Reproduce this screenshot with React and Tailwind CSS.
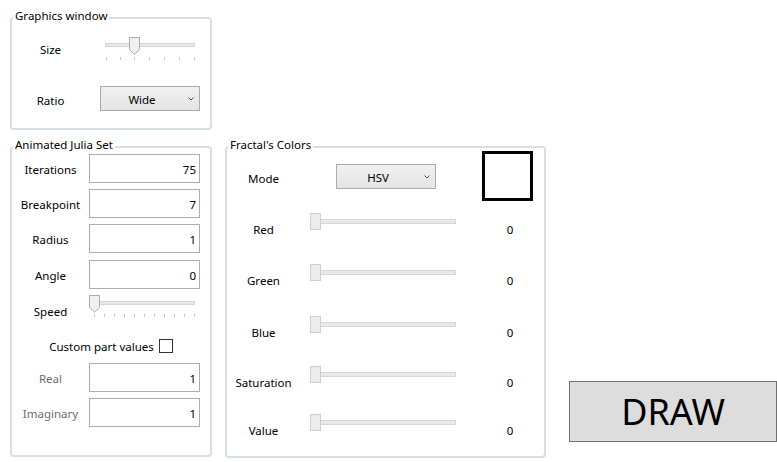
import React from "react";

function Group({ label, className, children }) {
  return (
    <div className={`relative border-2 border-[#d5dfe5] rounded-[4px] ${className}`}>
      <span className="absolute -top-[11px] left-[1px] bg-white px-[2px] leading-[16px] text-black whitespace-nowrap">
        {label}
      </span>
      {children}
    </div>
  );
}

function Chevron() {
  return (
    <svg width="6" height="4" viewBox="0 0 6 4" className="ml-[5px] shrink-0">
      <path d="M0.5 0.5 L3 3 L5.5 0.5" fill="none" stroke="#555" strokeWidth="1" />
    </svg>
  );
}

function Combo({ value }) {
  return (
    <div className="w-[100px] h-[25px] border border-[#acacac] bg-linear-to-b from-[#f0f0f0] to-[#e5e5e5] flex items-center shrink-0">
      <span className="w-[82px] text-center leading-[16px] translate-y-[1px]">{value}</span>
      <Chevron />
    </div>
  );
}

function TextBox({ value }) {
  return (
    <div className="w-[111px] h-[29px] border border-[#abadb3] bg-white flex items-center justify-end pr-[3px] leading-[16px] shrink-0">
      <span className="translate-y-[1px]">{value}</span>
    </div>
  );
}

function PointerThumb({ className }) {
  return (
    <svg width="11" height="18" viewBox="0 0 11 18" className={`absolute ${className}`}>
      <path d="M0.5 0.5 H10.5 V12.5 L5.5 17.3 L0.5 12.5 Z" fill="#f0f0f0" stroke="#acacac" strokeWidth="1" />
    </svg>
  );
}

function ColorSliderRow({ label, mt }) {
  return (
    <div className={`flex items-start ${mt}`}>
      <div className="w-[73px] text-center mt-[9px] leading-[16px] whitespace-nowrap">{label}</div>
      <div className="relative ml-[10px] w-[146px] h-[17px]">
        <div className="absolute left-0 right-0 top-[6px] h-[5px] bg-[#e7eaea] border border-[#d6d6d6]" />
        <div className="absolute left-0 top-0 w-[11px] h-[17px] bg-[#ececec] border border-[#cfcfcf]" />
      </div>
      <div className="ml-[34px] w-[40px] text-center mt-[9px] leading-[16px]">0</div>
    </div>
  );
}

export default function App() {
  const sizeTicks = [2, 16, 30, 45, 60, 75, 90];
  const speedTicks = [5, 15, 25, 35, 45, 55, 65, 75, 85, 95, 105];
  return (
    <div className="w-[777px] h-[462px] bg-white flex items-start text-[11.5px] text-black font-['Noto_Sans','Open_Sans',sans-serif] overflow-hidden">
      {/* Left column */}
      <div className="ml-[10px] w-[202px] flex flex-col shrink-0">
        <Group label="Graphics window" className="mt-[17px] h-[113px]">
          <div className="mt-[16px] h-[28px] flex items-center">
            <div className="w-[77px] text-center leading-[16px] translate-y-[1px]">Size</div>
            <div className="relative ml-[15px] w-[92px] h-[28px]">
              <div className="absolute left-[1px] right-[1px] top-[8px] h-[4px] bg-[#e7eaea] border border-[#d6d6d6]" />
              {sizeTicks.map((x) => (
                <div key={x} className="absolute top-[22px] h-[3px] w-[1px] bg-[#c4c4c4]" style={{ left: x }} />
              ))}
              <PointerThumb className="left-[25px] top-[2px]" />
            </div>
          </div>
          <div className="mt-[23px] h-[25px] flex items-center">
            <div className="w-[77px] text-center leading-[16px] translate-y-[2px]">Ratio</div>
            <div className="ml-[11px]">
              <Combo value="Wide" />
            </div>
          </div>
        </Group>

        <Group label="Animated Julia Set" className="mt-[16px] h-[311px]">
          {[
            ["Iterations", "75", "mt-[6px]"],
            ["Breakpoint", "7", "mt-[6px]"],
            ["Radius", "1", "mt-[6px]"],
            ["Angle", "0", "mt-[7px]"],
          ].map(([l, v, m]) => (
            <div key={l} className={`flex items-center h-[29px] ${m}`}>
              <div className="w-[77px] text-center leading-[16px] translate-y-[1px]">{l}</div>
              <TextBox value={v} />
            </div>
          ))}
          <div className="flex items-start mt-[6px]">
            <div className="w-[77px] text-center mt-[9px] leading-[16px]">Speed</div>
            <div className="relative w-[107px] h-[24px]">
              <div className="absolute left-[1px] w-[105px] top-[6px] h-[4px] bg-[#e7eaea] border border-[#d6d6d6]" />
              {speedTicks.map((x) => (
                <div key={x} className="absolute top-[19px] h-[3px] w-[1px] bg-[#c4c4c4]" style={{ left: x }} />
              ))}
              <PointerThumb className="left-0 top-0" />
            </div>
          </div>
          <div className="mt-[19px] h-[14px] flex items-center justify-center gap-[5px]">
            <span className="leading-[16px] translate-y-[1px]">Custom part values</span>
            <div className="w-[14px] h-[14px] border border-[#333333] bg-white" />
          </div>
          {[
            ["Real", "1", "mt-[10px]"],
            ["Imaginary", "1", "mt-[6px]"],
          ].map(([l, v, m]) => (
            <div key={l} className={`flex items-center h-[29px] ${m}`}>
              <div className="w-[77px] text-center leading-[16px] text-[#6d6d6d] translate-y-[1px]">{l}</div>
              <TextBox value={v} />
            </div>
          ))}
        </Group>
      </div>

      {/* Fractal's colors */}
      <Group label="Fractal's Colors" className="ml-[13px] w-[321px] mt-[146px] h-[312px] shrink-0">
        <div className="flex items-start">
          <div className="w-[73px] text-center mt-[23px] leading-[16px]">Mode</div>
          <div className="ml-[36px] mt-[16px]">
            <Combo value="HSV" />
          </div>
          <div className="ml-[46px] mt-[3px] w-[51px] h-[50px] border-[3px] border-black bg-white" />
        </div>
        <ColorSliderRow label="Red" mt="mt-[12px]" />
        <ColorSliderRow label="Green" mt="mt-[26px]" />
        <ColorSliderRow label="Blue" mt="mt-[27px]" />
        <ColorSliderRow label="Saturation" mt="mt-[25px]" />
        <ColorSliderRow label="Value" mt="mt-[23px]" />
      </Group>

      {/* DRAW button */}
      <button className="ml-[23px] mt-[381px] w-[208px] h-[61px] bg-[#dddddd] border border-[#707070] flex items-center justify-center text-[36px] leading-none text-black shrink-0">
        DRAW
      </button>
    </div>
  );
}
